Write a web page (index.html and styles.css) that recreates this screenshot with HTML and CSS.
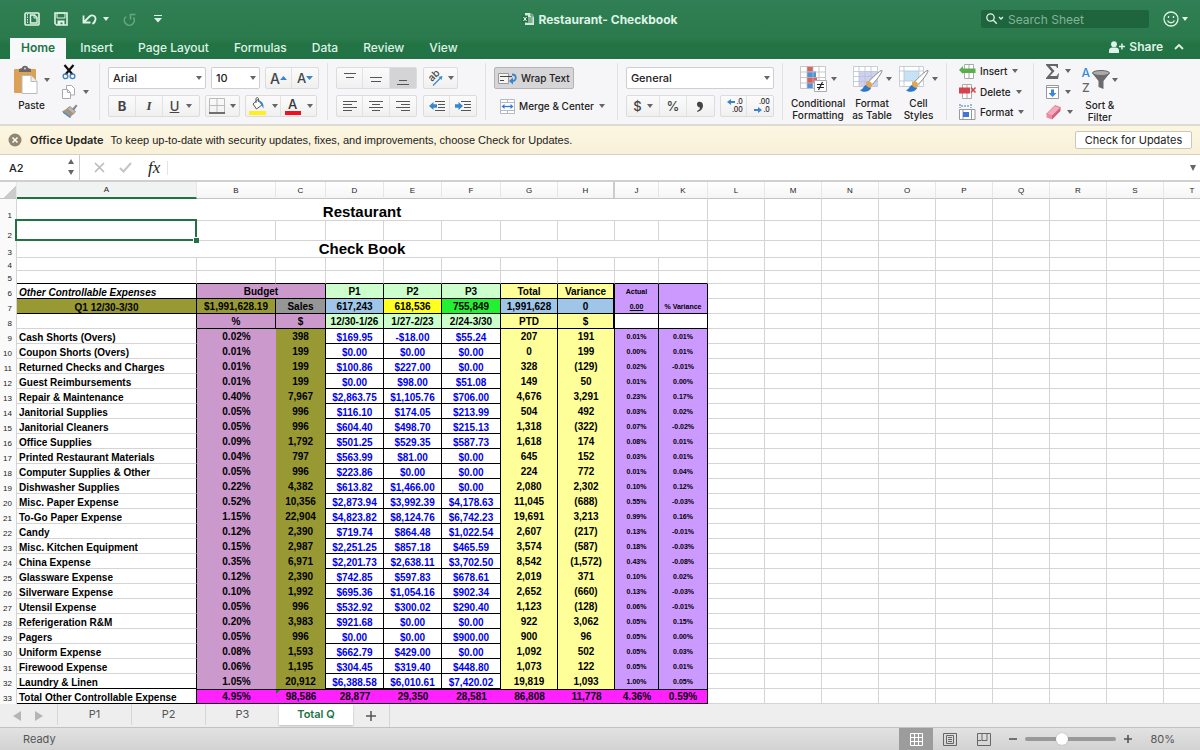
FILE: index.html
```html
<!DOCTYPE html>
<html lang="en">
<head>
    <meta charset="UTF-8">
    <meta name="viewport" content="width=device-width, initial-scale=1.0">
    <title>Restaurant- Checkbook</title>
    <link rel="stylesheet" href="styles.css">
</head>
<body>

    <header class="app-header">
        <div class="titlebar">
            <div class="quick">
                <button aria-label="Gallery"><svg width="16" height="14" viewBox="0 0 16 14" fill="none" stroke="#dff3e6"><rect x="1" y="1" width="14" height="12" rx="1" stroke-width="1.6"/><path d="M3.5 2v10" stroke-dasharray="1.5 1"/><path d="M6.5 3h4l2.500 2.500V11h-6.500z" stroke-width="1.400"/><path d="M10 3v3h3"/></svg></button>
                <button aria-label="Save"><svg width="14" height="14" viewBox="0 0 14 14"><path d="M1 1h12v12H2.500L1 11.500z" fill="none" stroke="#dff3e6" stroke-width="1.600"/><path d="M3 1h8v5H3z" fill="none" stroke="#dff3e6"/><path d="M3.500 8.500h7V13h-2v-2.500h-2V13h-3z" fill="#dff3e6"/></svg></button>
                <button aria-label="Undo"><svg width="15" height="12" viewBox="0 0 15 12" fill="none" stroke="#dff3e6" stroke-width="1.800"><path d="M1.500 2.500v7h7M2 9l5.500-5.500C10 1 14 3 13.500 6.500c-.300 2-1.500 3.500-3 4.500"/></svg><i class="caret light"></i></button>
                <button aria-label="Redo"><svg width="13" height="13" viewBox="0 0 13 13" fill="none" stroke="#6aa583" stroke-width="1.600"><path d="M3 3.500A5 5 0 1 0 10.500 4.500M7.500 6.500V1.500h5"/></svg></button>
                <button aria-label="Customize"><svg width="8" height="8" viewBox="0 0 8 8" fill="#dff3e6"><path d="M0 0h8v1H0zM0 3h8L4 7.500z"/></svg></button>
            </div>
            <h1 class="doc-title"><svg width="12" height="14" viewBox="0 0 12 14"><path d="M3 1h6l3 3v9H3z" fill="#cfe8d8"/><path d="M9 1v3h3" fill="none" stroke="#2c7b50"/><path d="M5 6h5.500M5 8h5.500M5 10h5.500" stroke="#2c7b50"/><path d="M0 3.500h6v7H0z" fill="#1f6f43"/><path d="M1.500 5l3 4M4.500 5l-3 4" stroke="#fff"/></svg>Restaurant- Checkbook</h1>
            <div class="title-right">
                <label class="search">
                    <svg width="18" height="12" viewBox="0 0 18 12" fill="none" stroke="#dff3e6" stroke-width="1.300"><circle cx="4.500" cy="4.500" r="3.700"/><path d="M7.300 7.300l3.500 3.500M13 4l2 2 2-2"/></svg>
                    <input type="text" placeholder="Search Sheet" aria-label="Search Sheet">
                </label>
                <button aria-label="Feedback"><svg width="16" height="16" viewBox="0 0 16 16" fill="none" stroke="#dff3e6" stroke-width="1.300"><circle cx="8" cy="8" r="7"/><path d="M4.500 9.500c1.500 3 5.500 3 7 0M5.500 5v2M10.500 5v2"/></svg><i class="caret light"></i></button>
            </div>
        </div>
        <nav class="tabs">
            <a class="active" href="#">Home</a>
            <a href="#">Insert</a>
            <a href="#">Page Layout</a>
            <a href="#">Formulas</a>
            <a href="#">Data</a>
            <a href="#">Review</a>
            <a href="#">View</a>
            <button class="share"><svg width="16" height="12" viewBox="0 0 16 12" fill="#dff3e6"><circle cx="5" cy="3.200" r="2.900"/><path d="M0 12V9.500C0 7 2 6.500 5 6.500s5 .500 5 3V12zM12.200 2.500h1.500v2.300H16v1.500h-2.300v2.300h-1.500V6.300H10V4.800h2.200z"/></svg>Share</button>
            <button class="collapse" aria-label="Collapse ribbon"><svg width="10" height="6" viewBox="0 0 10 6" fill="none" stroke="#dff3e6" stroke-width="1.800"><path d="M1 5l4-4 4 4"/></svg></button>
        </nav>
    </header>

    <section class="ribbon">
        <div class="group clipboard">
            <button class="big"><span><svg width="26" height="30" viewBox="0 0 26 30"><rect x="1" y="4" width="22" height="24" rx="1" fill="#dba157"/><path d="M6 7V4l3-1c0-3 6-3 6 0l3 1v3z" fill="#6c6763"/><circle cx="12" cy="3.500" r="1" fill="#ddd"/><path d="M9 10.500h9l6 6V28.500H9z" fill="#fff" stroke="#bbb"/><path d="M18 10.500v6h6" fill="#eee" stroke="#bbb"/></svg><i class="caret"></i></span>Paste</button>
            <div class="stack">
                <button aria-label="Cut"><svg width="14" height="16" viewBox="0 0 14 16" fill="none"><path d="M2.500 1l8 9.500M11.500 1l-8 9.500" stroke="#111" stroke-width="2.200"/><circle cx="3.500" cy="12.300" r="2.400" stroke="#3a7fc4" stroke-width="1.300"/><circle cx="10.500" cy="12.300" r="2.400" stroke="#3a7fc4" stroke-width="1.300"/></svg></button>
                <button aria-label="Copy"><svg width="14" height="14" viewBox="0 0 14 14" fill="#fff" stroke="#aaa"><path d="M4.500.500h5l3 3v6.500h-8z"/><path d="M.500 4.500h5l3 3v6h-8z"/><path d="M5.500 4.500v3h3" fill="none"/></svg><i class="caret"></i></button>
                <button aria-label="Format Painter"><svg width="16" height="14" viewBox="0 0 16 14"><path d="M10 5l4-4.500 1.500 1.300L12 6.500z" fill="#888"/><path d="M5 4.500l3-2 5.500 5-2 2.500z" fill="#b9b9b9" stroke="#777" stroke-width=".700"/><path d="M5 4.500L11.500 10 8 13.500 0 7.500z" fill="#a9937b"/><path d="M1 7.500l8 5.500-1 1-7-5z" fill="#3e8fce"/></svg></button>
            </div>
        </div>

        <div class="group rows">
            <div class="row">
                <span class="combo"><select class="font-name" aria-label="Font"><option>Arial</option></select></span>
                <span class="combo"><select class="font-size" aria-label="Font size"><option>10</option></select></span>
                <div class="set two">
                    <button class="glyph big-a" aria-label="Increase font size">A<svg width="7" height="4"><path d="M0 4h7L3.500 0z" fill="#3b86c8"/></svg></button>
                    <button class="glyph" aria-label="Decrease font size">A<svg width="7" height="4"><path d="M0 0h7L3.500 4z" fill="#3b86c8"/></svg></button>
                </div>
            </div>
            <div class="row">
                <div class="set">
                    <button class="glyph bold">B</button>
                    <button class="glyph italic">I</button>
                    <button class="glyph under wide"><u>U</u><i class="caret"></i></button>
                </div>
                <div class="set">
                    <button class="wide" aria-label="Borders"><svg width="16" height="16" viewBox="0 0 16 16"><path d="M.500.500h15M.500.500v14M15.500.500v14M8 .500v14M.500 7.500h15" stroke="#bbb" fill="none"/><path d="M0 15h16" stroke="#444" stroke-width="1.500"/></svg><i class="caret"></i></button>
                </div>
                <div class="set">
                    <button class="color" aria-label="Fill color"><svg width="18" height="18" viewBox="0 0 18 18"><path d="M5 7l5-4.500 4.500 5-6 4.500z" fill="#fff" stroke="#555"/><path d="M8 6V2c0-2 2.500-2 2.500 0v3" fill="none" stroke="#555"/><path d="M10 3.500c4 .500 6 2.500 5.500 8-1-1-1.500-3-2.500-4z" fill="#3b86c8"/><path d="M1 14h17v4H1z" fill="#ffef1f"/></svg><i class="caret"></i></button>
                    <button class="color" aria-label="Font color"><span class="font-color">A</span><i class="caret"></i></button>
                </div>
            </div>
        </div>

        <div class="group rows">
            <div class="row align">
                <div class="set three">
                    <button aria-label="Top align"><svg width="14" height="14"><path d="M1 2.500h12M3 6.500h8" stroke="#555"/></svg></button>
                    <button aria-label="Middle align"><svg width="14" height="14"><path d="M1 6.500h12M2 10.500h10" stroke="#555"/></svg></button>
                    <button class="on" aria-label="Bottom align"><svg width="14" height="14"><path d="M3 9.500h8M1 13.500h12" stroke="#555"/></svg></button>
                </div>
                <div class="set">
                    <button class="wide" aria-label="Orientation"><svg width="16" height="16" viewBox="0 0 16 16"><text transform="translate(5 12) rotate(-45)" class="ab">ab</text><path d="M6 15.500l7-7" stroke="#3b86c8" stroke-width="1.200"/><path d="M15.500 6l-1 4-3-3z" fill="#3b86c8"/></svg><i class="caret"></i></button>
                </div>
            </div>
            <div class="row align">
                <div class="set three">
                    <button aria-label="Align left"><svg width="14" height="12"><path d="M0 1.500h14M0 4.500h9M0 7.500h14M0 10.500h9" stroke="#555"/></svg></button>
                    <button aria-label="Center"><svg width="14" height="12"><path d="M0 1.500h14M3 4.500h8M0 7.500h14M3 10.500h8" stroke="#555"/></svg></button>
                    <button aria-label="Align right"><svg width="14" height="12"><path d="M0 1.500h14M5 4.500h9M0 7.500h14M5 10.500h9" stroke="#555"/></svg></button>
                </div>
                <div class="set two">
                    <button aria-label="Decrease indent"><svg width="16" height="12"><path d="M6 1.500h10M9 4.500h7M9 7.500h7M6 10.500h10" stroke="#555"/><path d="M0 6l4.500-4v2.300H8v3.400H4.500V10z" fill="#3b86c8"/></svg></button>
                    <button aria-label="Increase indent"><svg width="16" height="12"><path d="M6 1.500h10M9 4.500h7M9 7.500h7M6 10.500h10" stroke="#555"/><path d="M8 6L3.500 2v2.300H0v3.400h3.500V10z" fill="#3b86c8"/></svg></button>
                </div>
            </div>
        </div>

        <div class="group rows">
            <div class="row"><button class="labelled pressed"><svg width="19" height="13" viewBox="0 0 19 13"><path d="M.500 1.500h10v10H.500z" fill="#f4f4f4" stroke="#999"/><path d="M2 4.500h12M2 8.500h4" stroke="#444"/><path d="M14 2.500c5 0 5 6.500 0 6.500" fill="none" stroke="#3b86c8" stroke-width="1.800"/><path d="M11 9l4-3.500v7z" fill="#3b86c8"/></svg>Wrap Text</button></div>
            <div class="row"><button class="labelled merge"><svg width="15" height="15" viewBox="0 0 15 15"><path d="M.500.500h14v14H.500zM7.500.500v3M7.500 11.500v3M.500 3.500h14M.500 11.500h14" fill="#fff" stroke="#b4bac4"/><path d="M4 7.500h7" stroke="#2f7ad6" stroke-width="1.300"/><path d="M1.500 7.500l3-2.500v5zM13.500 7.500L10.500 5v5z" fill="#2f7ad6"/></svg>Merge &amp; Center<i class="caret"></i></button></div>
        </div>

        <div class="group rows">
            <div class="row"><span class="combo"><select class="number-format" aria-label="Number format"><option>General</option></select></span></div>
            <div class="row">
                <div class="set">
                    <button class="glyph money" aria-label="Currency">$<i class="caret"></i></button>
                    <button class="glyph">%</button>
                    <button aria-label="Comma style"><svg width="8" height="11" viewBox="0 0 8 11"><path d="M1 2.500C1.500 0 7 0 7 4.500 7 8 4.500 10 1.500 11l-.500-1C3 9 4 8 4 6.500 2 6.500.700 4.500 1 2.500z" fill="#444"/></svg></button>
                </div>
                <div class="set two">
                    <button class="decimals" aria-label="Increase decimal"><span><svg width="8" height="6"><path d="M0 3l4-3v2h4v2H4v2z" fill="#3b86c8"/></svg>.0</span><span>.00</span></button>
                    <button class="decimals" aria-label="Decrease decimal"><span>.00</span><span><svg width="8" height="6"><path d="M8 3L4 0v2H0v2h4v2z" fill="#3b86c8"/></svg>.0</span></button>
                </div>
            </div>
        </div>

        <div class="group styles">
            <button class="big"><span><svg width="28" height="28" viewBox="0 0 28 28"><path d="M.500 1.500h25v22H.500z" fill="#fff"/><path d="M7 1.500h6v5H7zM7 12h10v6H7z" fill="#df5f5f"/><path d="M7 6.500h9V12H7zM7 18h6v5.500H7z" fill="#4d93dc"/><path d="M.500 1.500h25v22H.500zM7 1.500v22M13 1.500v22M19 1.500v22M.500 7h25M.500 12.500h25M.500 18h25" fill="none" stroke="#bbb" stroke-width=".800"/><path d="M14.500 15.500h12v11h-12z" fill="#fff" stroke="#aaa"/><path d="M17 19.500h7M17 22.500h7M22.500 17l-4 8" stroke="#222" stroke-width="1.200"/></svg><i class="caret"></i></span>Conditional<br>Formatting</button>
            <button class="big"><span><svg width="30" height="28" viewBox="0 0 30 28"><path d="M.500 1.500h24v20H.500z" fill="#fff"/><path d="M6 6.500h18v15H6z" fill="#cfcff4"/><path d="M.500 1.500h24v20H.500zM6 1.500v20M12 1.500v20M18 1.500v20M.500 6.500h24M.500 11.500h24M.500 16.500h24" fill="none" stroke="#b9c3cf" stroke-width=".800"/><path d="M29 5.500c1 1-7 12-11 15l-3-3C19 13 27 5 29 5.500z" fill="#fff" stroke="#888"/><path d="M13 17c3-2 6 0 6 3s-3 5-6 5z" fill="#e2a657"/><path d="M13 20c-3 1-3 5-6 5 2 3 10 2 11-2-2 0-4-1-5-3z" fill="#2d78c8"/></svg><i class="caret"></i></span>Format<br>as Table</button>
            <button class="big"><span><svg width="30" height="28" viewBox="0 0 30 28"><path d="M.500 1.500h24v20H.500z" fill="#fff"/><path d="M5 6h15v10H5z" fill="#c5e2f6"/><path d="M.500 1.500h24v20H.500zM5 1.500v20M20 1.500v20M.500 6h24M.500 16h24" fill="none" stroke="#b9c3cf" stroke-width=".800"/><path d="M29 5.500c1 1-7 12-11 15l-3-3C19 13 27 5 29 5.500z" fill="#fff" stroke="#888"/><path d="M13 17c3-2 6 0 6 3s-3 5-6 5z" fill="#e2a657"/><path d="M13 20c-3 1-3 5-6 5 2 3 10 2 11-2-2 0-4-1-5-3z" fill="#2d78c8"/></svg><i class="caret"></i></span>Cell<br>Styles</button>
        </div>

        <div class="group stack cells">
            <button class="labelled"><svg width="17" height="15" viewBox="0 0 17 15"><path d="M5.500.500h9v14h-9zM10 .500v14" fill="#fff" stroke="#aaa"/><path d="M0 6l4-4v2.500h12.500V9H4v1z" fill="#5bae4e"/></svg>Insert<i class="caret"></i></button>
            <button class="labelled"><svg width="17" height="15" viewBox="0 0 17 15"><path d="M3.500.500h9v14h-9zM8 .500v14" fill="#fff" stroke="#aaa"/><path d="M0 3.500h11v6H0z" fill="#d8434b"/><path d="M12 3.500l4.500 5M16.500 3.500l-4.500 5" stroke="#d8434b" stroke-width="1.500"/></svg>Delete<i class="caret"></i></button>
            <button class="labelled"><svg width="17" height="16" viewBox="0 0 17 16"><path d="M1 0v4M12 0v4M2 2h9" stroke="#3b78c8" stroke-dasharray="2 1"/><path d="M.500 5.500h15.500v10H.500zM4 5.500v10M12.500 5.500v10" fill="#fff" stroke="#999"/><path d="M4 8h6v5H4z" fill="#3b78d8"/></svg>Format<i class="caret"></i></button>
        </div>

        <div class="group editing">
            <div class="stack">
                <button aria-label="AutoSum"><svg width="13" height="15" viewBox="0 0 13 15"><path d="M0 0h12v4h-1c-.500-1.500-1-2-3-2H4l4.500 5L4 12h5c2 0 2.500-.500 3-2.500h1L12 15H0v-1l5.500-6.500L0 1z" fill="#666"/></svg><i class="caret"></i></button>
                <button aria-label="Fill"><svg width="13" height="14" viewBox="0 0 13 14"><path d="M.500.500h12v13H.500z" fill="#fff" stroke="#999"/><path d="M.500 2.500h12" stroke="#999"/><path d="M5 4.500h3V8h2.500l-4 4-4-4H5z" fill="#3b86d8"/></svg><i class="caret"></i></button>
                <button aria-label="Clear"><svg width="15" height="15" viewBox="0 0 15 15"><path d="M.500 9L9 .500l5.500 2L6 11z" fill="#f7a9bb" stroke="#c4506e" stroke-width=".600"/><path d="M.500 9L6 11v3.500L.500 12.500z" fill="#f08aa4"/><path d="M6 11l8.500-8.500V6L6 14.500z" fill="#d2607f"/></svg><i class="caret"></i></button>
            </div>
            <button class="big sort"><span><span class="letters"><b>A</b><b>Z</b></span><svg width="18" height="20" viewBox="0 0 18 20"><ellipse cx="9" cy="3" rx="8.500" ry="2.500" fill="#aaa" stroke="#666"/><path d="M.500 3.500c2 2.500 15 2.500 17 0L11.500 11v8l-5-2v-6z" fill="#6b6b6b"/></svg><i class="caret"></i></span>Sort &amp;<br>Filter</button>
        </div>
    </section>

    <section class="notice">
        <button aria-label="Dismiss"><svg width="14" height="14" viewBox="0 0 14 14"><circle cx="7" cy="7" r="6.500" fill="#93866e"/><path d="M4.500 4.500l5 5M9.500 4.500l-5 5" stroke="#fff" stroke-width="1.500"/></svg></button>
        <strong>Office Update</strong>
        <p>To keep up-to-date with security updates, fixes, and improvements, choose Check for Updates.</p>
        <button class="check">Check for Updates</button>
    </section>

    <section class="formula-bar">
        <label class="name-box"><input type="text" value="A2" aria-label="Name box"><svg width="8" height="17" viewBox="0 0 8 17" fill="#666"><path d="M1 5h6L4 0zM1 11h6l-3 5z"/></svg></label>
        <button aria-label="Cancel"><svg width="11" height="11" viewBox="0 0 11 11" stroke="#bbb" stroke-width="1.600"><path d="M1 1l9 9M10 1l-9 9"/></svg></button>
        <button aria-label="Enter"><svg width="13" height="11" viewBox="0 0 13 11" fill="none" stroke="#c4c4c4" stroke-width="2"><path d="M1 6l3.500 3.500L12 1"/></svg></button>
        <span class="fx">fx</span>
        <input class="formula" type="text" aria-label="Formula">
        <i class="caret expand"></i>
    </section>

    <main class="sheet">
        <table>
            <colgroup>
                <col class="w-num"><col class="w-a"><col class="w-b"><col class="w-c"><col class="w-d"><col class="w-d"><col class="w-f"><col class="w-g"><col class="w-g"><col class="w-j"><col class="w-k"><col class="w-g" span="9">
            </colgroup>
            <thead>
                <tr>
                    <th class="corner"></th>
                    <th class="current">A</th><th>B</th><th>C</th><th>D</th><th>E</th><th>F</th><th>G</th><th class="hidden-next">H</th><th>J</th><th>K</th>
                    <th>L</th><th>M</th><th>N</th><th>O</th><th>P</th><th>Q</th><th>R</th><th>S</th><th>T</th>
                </tr>
            </thead>
            <tbody id="cells">
                <tr class="r1"><th>1</th><td class="title" colspan="10">Restaurant</td></tr>
                <tr class="r2"><th>2</th><td class="selected"></td></tr>
                <tr class="r3"><th>3</th><td class="title" colspan="10">Check Book</td></tr>
                <tr class="r4"><th>4</th></tr>
                <tr class="r4 above"><th>5</th></tr>
                <tr class="head">
                    <th>6</th><td class="name">Other Controllable Expenses</td><td class="plum" colspan="2">Budget</td>
                    <td class="mint">P1</td><td class="mint">P2</td><td class="mint">P3</td>
                    <td class="cream">Total</td><td class="cream edge">Variance</td>
                    <td class="violet open">Actual</td><td class="violet open"></td>
                </tr>
                <tr class="head">
                    <th>7</th><td class="olive period">Q1 12/30-3/30</td><td class="olive">$1,991,628.19</td><td class="gray">Sales</td>
                    <td class="blue">617,243</td><td class="yellow">618,536</td><td class="green">755,849</td>
                    <td class="blue">1,991,628</td><td class="blue edge">0</td>
                    <td class="violet"><u>0.00</u></td><td class="violet">% Variance</td>
                </tr>
                <tr class="head last">
                    <th>8</th><td class="name"></td><td class="plum">%</td><td class="plum">$</td>
                    <td class="mint">12/30-1/26</td><td class="mint">1/27-2/23</td><td class="mint">2/24-3/30</td>
                    <td class="cream">PTD</td><td class="cream edge">$</td>
                    <td></td><td></td>
                </tr>
            </tbody>
        </table>
    </main>

    <nav class="sheet-tabs">
        <button class="arrow" aria-label="Previous sheet"><svg width="8" height="10"><path d="M8 0v10L0 5z" fill="#b5b5b5"/></svg></button>
        <button class="arrow" aria-label="Next sheet"><svg width="8" height="10"><path d="M0 0v10l8-5z" fill="#b5b5b5"/></svg></button>
        <a href="#">P1</a>
        <a href="#">P2</a>
        <a href="#">P3</a>
        <a class="active" href="#">Total Q</a>
        <button class="add" aria-label="Add sheet"><svg width="10" height="10"><path d="M5 0v10M0 5h10" stroke="#555" stroke-width="1.500"/></svg></button>
    </nav>

    <footer class="status">
        <span class="ready">Ready</span>
        <button class="view on" aria-label="Normal view"><svg width="13" height="13"><path d="M.500.500h12v12H.500zM4.500.500v12M8.500.500v12M.500 4.500h12M.500 8.500h12" fill="none" stroke="#fff"/></svg></button>
        <button class="view" aria-label="Page layout view"><svg width="14" height="13"><path d="M.500.500h13v12H.500zM3.500 2.500h7v8h-7zM5 4.500h4M5 6.500h4M5 8.500h4" fill="none" stroke="#666"/></svg></button>
        <button class="view" aria-label="Page break view"><svg width="14" height="13"><path d="M.500.500h13v12H.500zM5 .500v7h5v-7M.500 7.500h4" fill="none" stroke="#666"/></svg></button>
        <button class="zoom" aria-label="Zoom out"><svg width="8" height="8"><path d="M0 4h8" stroke="#555" stroke-width="1.600"/></svg></button>
        <input type="range" min="10" max="190" value="80" aria-label="Zoom">
        <button class="zoom" aria-label="Zoom in"><svg width="8" height="8"><path d="M0 4h8M4 0v8" stroke="#555" stroke-width="1.600"/></svg></button>
        <span class="percent">80%</span>
    </footer>

    <script src="script.js"></script>
</body>
</html>
```

FILE: styles.css
```css
* {
    box-sizing: border-box;
}
body {
    margin: 0;
    min-height: 100vh;
    display: flex;
    flex-direction: column;
    overflow: hidden;
    font-family: Inter, "Liberation Sans", sans-serif;
    font-size: 10px;
    color: #222;
    background: #eee;
}
button {
    display: flex;
    align-items: center;
    justify-content: center;
    padding: 0;
    border: 0;
    background: none;
    font: inherit;
    color: inherit;
}
svg {
    flex: none;
    overflow: visible;
}
input, select {
    font: inherit;
    color: inherit;
    border: 0;
    background: none;
    outline: none;
}
a {
    text-decoration: none;
    color: inherit;
}
.caret {
    border: 3px solid transparent;
    border-top: 4px solid #666;
    border-bottom: 0;
    flex: none;
}
.caret.light {
    border-top-color: #dff3e6;
}

/* title bar and tabs */
.app-header {
    background: linear-gradient(#317f54, #2a7a4d 38px, #237344 44px, #217346);
    color: #dff3e6;
}
.titlebar {
    display: grid;
    grid-template-columns: 1fr auto 1fr;
    align-items: center;
    height: 38px;
    padding: 0 12px;
}
.quick {
    display: flex;
    align-items: center;
    gap: 14px;
    padding-left: 12px;
}
.quick button {
    gap: 6px;
}
.quick button:last-child {
    margin-left: 4px;
}
.doc-title {
    display: flex;
    align-items: center;
    gap: 4px;
    margin: 0;
    font-size: 12px;
    font-weight: 700;
}
.title-right {
    display: flex;
    justify-content: flex-end;
    gap: 14px;
}
.title-right button {
    gap: 3px;
}
.search {
    display: flex;
    align-items: center;
    gap: 4px;
    width: 168px;
    height: 18px;
    padding-left: 5px;
    background: #1e653e;
    border-radius: 2px;
}
.search input {
    width: 120px;
    padding: 0;
    font-size: 12px;
}
.search input::placeholder {
    color: #84b396;
}
.tabs {
    display: flex;
    align-items: stretch;
    height: 21px;
    padding: 0 16px 0 10px;
    font-size: 12px;
    font-weight: 500;
}
.tabs a {
    padding: 0 13px 0 12px;
    line-height: 20px;
}
.tabs .active {
    padding: 0 11px;
    margin-right: 2px;
    background: #f7f8f9;
    color: #217346;
    font-weight: 600;
}
.tabs .share {
    margin-left: auto;
    gap: 4px;
    font-weight: 600;
    height: 17px;
}
.tabs .collapse {
    margin-left: 11px;
    height: 17px;
}

/* ribbon */
.ribbon {
    display: flex;
    height: 67px;
    padding: 4px 0 4px 13px;
    background: #f6f6f8;
    border-bottom: 2px solid #dcdad2;
    font-weight: 500;
    overflow: hidden;
}
.group {
    flex: none;
    display: flex;
    padding: 0 8px;
    border-right: 1px solid #e2e2e4;
}
.group:last-child {
    border-right: 0;
}
.group.clipboard {
    padding: 0 10px 0 0;
    gap: 12px;
}
.rows {
    flex-direction: column;
    gap: 6px;
    padding-top: 4px;
}
.row {
    display: flex;
    gap: 5px;
}
.row.align {
    gap: 6px;
}
.stack {
    display: flex;
    flex-direction: column;
    justify-content: space-between;
    align-items: flex-start;
}
.clipboard .stack button {
    height: 18px;
    gap: 7px;
}
.big {
    flex-direction: column;
    justify-content: flex-start;
    line-height: 12px;
    padding-top: 2px;
}
.big > span {
    display: flex;
    align-items: center;
    gap: 5px;
    height: 30px;
    margin-bottom: 4px;
}
.combo {
    position: relative;
    display: block;
}
.combo::after {
    content: "";
    position: absolute;
    right: 4px;
    top: 9px;
    border: 3px solid transparent;
    border-top: 4px solid #666;
    border-bottom: 0;
}
.combo select {
    appearance: none;
    display: block;
    height: 22px;
    padding: 0 4px;
    background: #fff;
    border: 1px solid #cfcfcf;
    border-radius: 2px;
    font-size: 11px;
}
.font-name {
    width: 98px;
}
.font-size {
    width: 49px;
}
.number-format {
    width: 148px;
}
.set {
    display: flex;
    height: 22px;
    border: 1px solid #dcdcdc;
    border-radius: 2px;
    background: linear-gradient(#fbfbfb, #f0f0f0);
}
.set button {
    width: 27px;
    border-right: 1px solid #e2e2e2;
}
.set button:last-child {
    border-right: 0;
}
.two button {
    width: 26px;
}
.three {
    width: 81px;
}
.set .on {
    background: #d4d4d6;
}
.set .wide, .set .money {
    width: 33px;
    gap: 5px;
}
.set .under {
    width: 36px;
    gap: 7px;
}
.set .color {
    width: 35px;
    gap: 6px;
}
.glyph {
    font-size: 13px;
    color: #444;
}
.big-a {
    font-size: 14px;
}
.bold {
    font-weight: 700;
}
.italic {
    font-family: "Liberation Serif", serif;
    font-style: italic;
    font-weight: 700;
}
.font-color {
    width: 16px;
    height: 18px;
    line-height: 14px;
    border-bottom: 4px solid #f01020;
    font-size: 13px;
    color: #333;
}
.ab {
    font-size: 10px;
    fill: #444;
}
.labelled {
    height: 22px;
    gap: 4px;
    padding: 0 3px;
    border: 1px solid transparent;
    border-radius: 2px;
}
.labelled .caret {
    margin-left: 1px;
}
.merge {
    padding-left: 5px;
}
.pressed {
    background: #d6d6d8;
    border-color: #b4b4b4;
}
.set .decimals {
    flex-direction: column;
    align-items: flex-end;
    padding-right: 3px;
    font-size: 7px;
    line-height: 8px;
}
.decimals span {
    display: flex;
    align-items: center;
    gap: 1px;
}
.styles {
    gap: 7px;
}
.styles .big > span {
    gap: 3px;
}
.cells {
    padding: 0 5px 0 8px;
}
.cells .labelled {
    height: 16px;
}
.editing {
    padding-left: 12px;
    gap: 8px;
}
.editing .stack button {
    height: 16px;
    gap: 6px;
}
.sort > span {
    gap: 2px;
}
.letters {
    display: flex;
    flex-direction: column;
    font-size: 12px;
    line-height: 15px;
    color: #2f8be0;
}
.letters b {
    font-weight: 500;
}
.letters b:last-child {
    color: #666;
}

/* update notice */
.notice {
    display: flex;
    align-items: center;
    height: 29px;
    padding: 0 8px;
    background: linear-gradient(#fcf7e2, #f8f0d8);
    border-bottom: 1px solid #d3d1c6;
    font-size: 11px;
}
.notice strong {
    margin: 0 7px 0 8px;
    font-weight: 600;
}
.notice p {
    margin: 0;
    font-family: "Liberation Sans", Arial, sans-serif;
}
.check {
    margin-left: auto;
    width: 117px;
    height: 18px;
    background: #fff;
    border: 1px solid #cbc7b8;
    border-radius: 2px;
}

/* formula bar */
.formula-bar {
    display: flex;
    align-items: center;
    height: 25px;
    background: #fff;
}
.formula-bar button {
    margin-left: 14px;
}
.name-box {
    display: flex;
    align-items: center;
    width: 80px;
    height: 100%;
    border-right: 1px solid #ccc;
}
.name-box input {
    width: 67px;
    padding: 0 9px;
    font-size: 11px;
    font-weight: 500;
}
.fx {
    margin-left: 16px;
    font-family: "Liberation Serif", serif;
    font-style: italic;
    font-size: 17px;
}
.formula {
    flex: 1;
    margin-left: 7px;
    border-left: 1px solid #e4e4e4;
}
.expand {
    margin-right: 4px;
    border-top-width: 6px;
}

/* spreadsheet */
.sheet {
    flex: 1;
    overflow: hidden;
    border-top: 2px solid #d0d0d0;
    background: #fff;
}
table {
    width: 1221px;
    min-width: 100%;
    table-layout: fixed;
    border-collapse: separate;
    border-spacing: 0;
    font-family: "Liberation Sans", Arial, sans-serif;
    font-size: 10px;
    line-height: 13px;
}
.w-num { width: 17px; }
.w-a { width: 180px; }
.w-b { width: 79px; }
.w-c { width: 50px; }
.w-d { width: 58px; }
.w-f { width: 59px; }
.w-g { width: 57px; }
.w-j { width: 44px; }
.w-k { width: 49px; }
th, td {
    padding: 0;
    border-right: 1px solid #d4d4d4;
    border-bottom: 1px solid #d4d4d4;
    white-space: nowrap;
}
td {
    height: 15px;
    text-align: center;
    font-weight: bold;
    color: #000;
}
thead th {
    height: 17px;
    background: linear-gradient(#fff, #f5f5f5);
    border-right-color: #e6e6e6;
    border-bottom-color: #c4c4c4;
    font-size: 8px;
    font-weight: normal;
    line-height: 15px;
}
thead .current {
    background: #f0f3f1;
    border-bottom: 2px solid #217346;
}
.corner {
    background: linear-gradient(135deg, #fafafa 60%, #ccc 60%);
}
tbody th {
    padding: 0 4px 1px 0;
    background: #fafafa;
    border-bottom: 0;
    font-size: 8px;
    font-weight: normal;
    line-height: 9px;
    text-align: right;
    vertical-align: bottom;
}
.hidden-next {
    border-right: 2px solid #ccc;
}
.r1 td { height: 22px; }
.r2 td { height: 20px; }
.r3 td { height: 17px; }
.r4 td { height: 13px; }
.title {
    font-size: 15px;
    line-height: 16px;
    vertical-align: bottom;
}
.r1 .title {
    vertical-align: middle;
    padding-top: 4px;
}
.selected {
    position: relative;
}
.selected::before {
    content: "";
    position: absolute;
    inset: -2px -1px -1px -2px;
    border: 2px solid #217346;
}
.selected::after {
    content: "";
    position: absolute;
    right: -3px;
    bottom: -3px;
    width: 5px;
    height: 5px;
    background: #217346;
    border-top: 1px solid #fff;
    border-left: 1px solid #fff;
}
.above td:nth-child(-n+11) {
    border-bottom-color: #000;
}
.head td:nth-child(-n+11) {
    border-color: #000;
}
.head td:nth-last-child(-n+9) {
    border-color: #d4d4d4;
}
.head td.open {
    border-bottom: 0;
}
.head.last .name {
    border-bottom-color: #d4d4d4;
}
.name, .period {
    line-height: 11px;
    vertical-align: bottom;
}
.name {
    padding-left: 2px;
    text-align: left;
}
.head .name {
    font-style: italic;
}
.edge {
    border-right-width: 2px;
}
.plum { background: #cc99cc; }
.olive { background: #999933; }
.gray { background: #969696; }
.mint { background: #ccffcc; }
.blue { background: #9fc5e8; }
.yellow { background: #ffff20; }
.green { background: #24f032; }
.cream { background: #ffff99; }
.violet {
    background: #cc99ff;
    font-size: 7px;
}
.expense .name, .expense .cream, .expense .violet {
    border-right-color: #000;
}
.expense .plum, .expense .olive, .expense .cream, .expense .violet {
    border-bottom: 0;
}
.expense .plum {
    border-right: 0;
}
.expense .olive {
    border-right-color: #000;
}
.paid {
    color: #0000f0;
    border-color: #000;
    line-height: 11px;
    vertical-align: bottom;
}
.before-total td:nth-child(2) {
    border-bottom-color: #000;
}
.total td:nth-child(-n+11) {
    border-bottom-color: #000;
    border-top: 1px solid #000;
}
.total td:nth-child(2) {
    border-top: 0;
    border-right-color: #000;
}
.total .magenta {
    background: #ff22ff;
    border-right: 0;
}
.total td:nth-child(11) {
    border-right: 1px solid #000;
}
.flagged {
    position: relative;
}
.flagged::before {
    content: "";
    position: absolute;
    left: 0;
    top: 0;
    border-top: 4px solid #1d7a2e;
    border-right: 4px solid transparent;
}

/* sheet tabs */
.sheet-tabs {
    display: flex;
    height: 24px;
    padding-left: 13px;
    border-bottom: 1px solid #c2c2c2;
    background: #eee;
    font-size: 11px;
    color: #555;
}
.arrow {
    width: 8px;
    margin-right: 14px;
}
.sheet-tabs a {
    width: 74px;
    height: 21px;
    line-height: 20px;
    text-align: center;
    border-left: 1px solid #d6d6d6;
}
.sheet-tabs .active {
    background: #fff;
    border: 0;
    color: #217346;
    font-weight: 600;
    box-shadow: 0 1px 2px #bbb;
}
.add {
    width: 37px;
    border-right: 1px solid #d6d6d6;
}

/* status bar */
.status {
    display: flex;
    align-items: center;
    height: 22px;
    padding: 0 25px 0 23px;
    background: linear-gradient(#e2e2e2, #d2d2d2);
    font-size: 11px;
    color: #555;
}
.ready {
    margin-right: auto;
}
.view {
    width: 34px;
    height: 22px;
}
.view.on {
    background: #9c9c9c;
}
.zoom {
    margin: 0 8px;
}
.status input {
    appearance: none;
    width: 91px;
    height: 4px;
    margin: 0;
    background: #999;
    border-radius: 2px;
}
.status input::-webkit-slider-thumb {
    appearance: none;
    width: 12px;
    height: 12px;
    border-radius: 50%;
    background: #fff;
    box-shadow: 0 0 1px #888;
}
.percent {
    margin-left: 10px;
}
```

FILE: script.js
```js
const expenses = [
    ["Cash Shorts (Overs)", "0.02%", "398", "$169.95", "-$18.00", "$55.24", "207", "191", "0.01%", "0.01%"],
    ["Coupon Shorts (Overs)", "0.01%", "199", "$0.00", "$0.00", "$0.00", "0", "199", "0.00%", "0.01%"],
    ["Returned Checks and Charges", "0.01%", "199", "$100.86", "$227.00", "$0.00", "328", "(129)", "0.02%", "-0.01%"],
    ["Guest Reimbursements", "0.01%", "199", "$0.00", "$98.00", "$51.08", "149", "50", "0.01%", "0.00%"],
    ["Repair & Maintenance", "0.40%", "7,967", "$2,863.75", "$1,105.76", "$706.00", "4,676", "3,291", "0.23%", "0.17%"],
    ["Janitorial Supplies", "0.05%", "996", "$116.10", "$174.05", "$213.99", "504", "492", "0.03%", "0.02%"],
    ["Janitorial Cleaners", "0.05%", "996", "$604.40", "$498.70", "$215.13", "1,318", "(322)", "0.07%", "-0.02%"],
    ["Office Supplies", "0.09%", "1,792", "$501.25", "$529.35", "$587.73", "1,618", "174", "0.08%", "0.01%"],
    ["Printed Restaurant Materials", "0.04%", "797", "$563.99", "$81.00", "$0.00", "645", "152", "0.03%", "0.01%"],
    ["Computer Supplies & Other", "0.05%", "996", "$223.86", "$0.00", "$0.00", "224", "772", "0.01%", "0.04%"],
    ["Dishwasher Supplies", "0.22%", "4,382", "$613.82", "$1,466.00", "$0.00", "2,080", "2,302", "0.10%", "0.12%"],
    ["Misc. Paper Expense", "0.52%", "10,356", "$2,873.94", "$3,992.39", "$4,178.63", "11,045", "(688)", "0.55%", "-0.03%"],
    ["To-Go Paper Expense", "1.15%", "22,904", "$4,823.82", "$8,124.76", "$6,742.23", "19,691", "3,213", "0.99%", "0.16%"],
    ["Candy", "0.12%", "2,390", "$719.74", "$864.48", "$1,022.54", "2,607", "(217)", "0.13%", "-0.01%"],
    ["Misc. Kitchen Equipment", "0.15%", "2,987", "$2,251.25", "$857.18", "$465.59", "3,574", "(587)", "0.18%", "-0.03%"],
    ["China Expense", "0.35%", "6,971", "$2,201.73", "$2,638.11", "$3,702.50", "8,542", "(1,572)", "0.43%", "-0.08%"],
    ["Glassware Expense", "0.12%", "2,390", "$742.85", "$597.83", "$678.61", "2,019", "371", "0.10%", "0.02%"],
    ["Silverware Expense", "0.10%", "1,992", "$695.36", "$1,054.16", "$902.34", "2,652", "(660)", "0.13%", "-0.03%"],
    ["Utensil Expense", "0.05%", "996", "$532.92", "$300.02", "$290.40", "1,123", "(128)", "0.06%", "-0.01%"],
    ["Referigeration R&M", "0.20%", "3,983", "$921.68", "$0.00", "$0.00", "922", "3,062", "0.05%", "0.15%"],
    ["Pagers", "0.05%", "996", "$0.00", "$0.00", "$900.00", "900", "96", "0.05%", "0.00%"],
    ["Uniform Expense", "0.08%", "1,593", "$662.79", "$429.00", "$0.00", "1,092", "502", "0.05%", "0.03%"],
    ["Firewood Expense", "0.06%", "1,195", "$304.45", "$319.40", "$448.80", "1,073", "122", "0.05%", "0.01%"],
    ["Laundry & Linen", "1.05%", "20,912", "$6,388.58", "$6,010.61", "$7,420.02", "19,819", "1,093", "1.00%", "0.05%"]
];
const totals = ["Total Other Controllable Expense", "4.95%", "98,586", "28,877", "29,350", "28,581", "86,808", "11,778", "4.36%", "0.59%"];
const columnClasses = ["name", "plum", "olive", "paid", "paid", "paid", "cream", "cream", "violet", "violet"];
const columnCount = 20;

const body = document.getElementById("cells");

function addRow(number, values, classes) {
    const row = body.insertRow();
    const header = document.createElement("th");
    header.textContent = number;
    row.appendChild(header);
    values.forEach((value, i) => {
        const cell = row.insertCell();
        cell.textContent = value;
        cell.className = classes[i];
    });
    return row;
}

expenses.forEach((values, i) => {
    addRow(i + 9, values, columnClasses).className = "expense";
});
body.lastElementChild.classList.add("before-total");

const totalRow = addRow(expenses.length + 9, totals, totals.map((t, i) => i === 0 ? "name" : "magenta"));
totalRow.className = "total";
totalRow.cells[3].classList.add("flagged");

// fill every row out to column T with empty cells
for (const row of body.rows) {
    let used = 0;
    for (const cell of row.cells) {
        used += cell.colSpan;
    }
    for (; used < columnCount; used++) {
        row.insertCell();
    }
}
```
